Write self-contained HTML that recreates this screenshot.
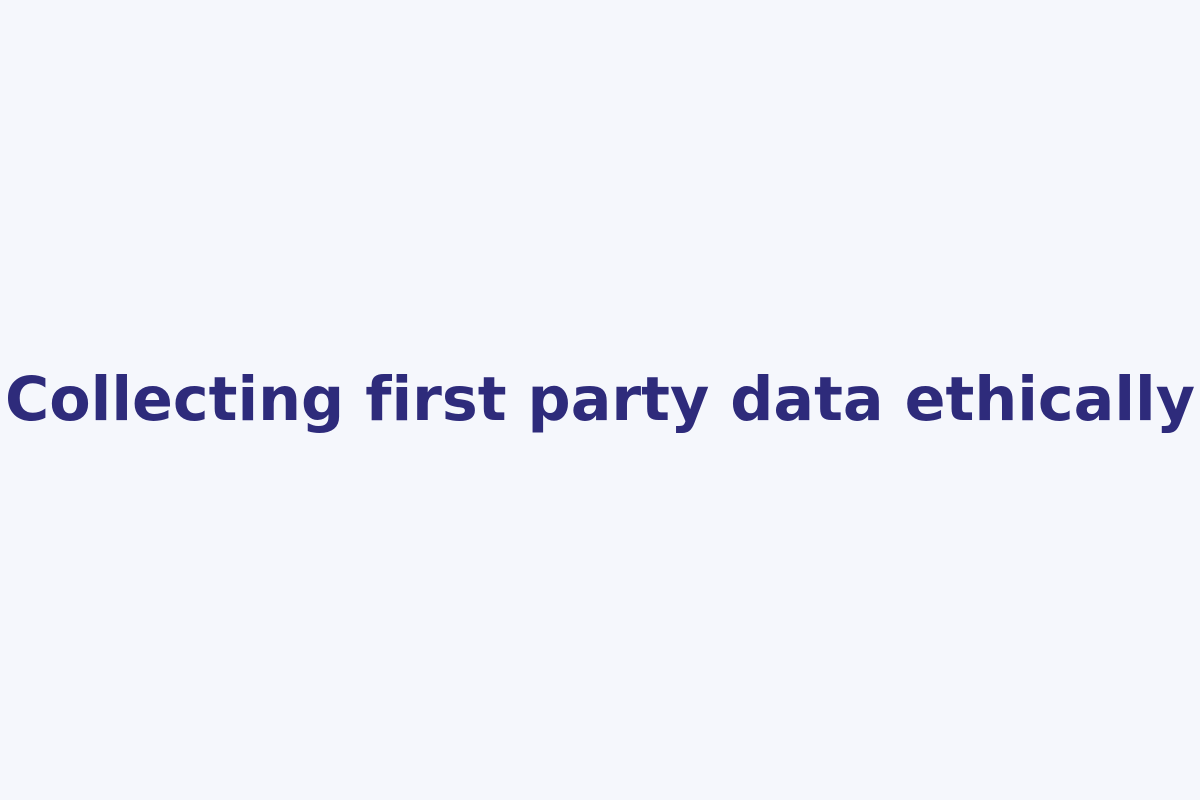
<!DOCTYPE html>
<html><head><style>
html,body{margin:0;width:1200px;height:800px;background:#f5f7fc;overflow:hidden}
.t{position:absolute;left:-100px;width:1400px;top:362px;text-align:center;font-family:"DejaVu Sans",sans-serif;font-weight:bold;font-size:60.3px;line-height:76px;color:#2e2b7b;white-space:nowrap;font-variant-ligatures:none;font-feature-settings:"liga" 0}
</style></head><body><div class="t">Collecting first party data ethically</div></body></html>
